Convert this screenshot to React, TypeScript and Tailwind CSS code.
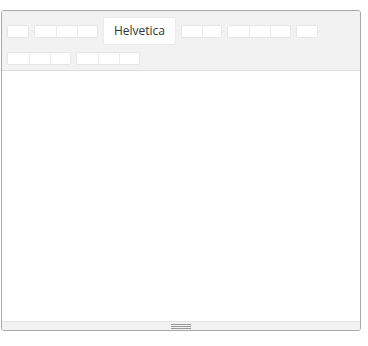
import React from 'react';

const Group = ({ widths }: { widths: number[] }) => (
  <div className="flex h-[13px] overflow-hidden rounded-[2px] border border-[#e6e6e6] bg-white">
    {widths.map((w, i) => (
      <div
        key={i}
        className={`h-full ${i > 0 ? 'border-l border-[#ececec]' : ''}`}
        style={{ width: w }}
      />
    ))}
  </div>
);

export default function App() {
  return (
    <div className="h-[346px] w-[368px] bg-white pl-px pt-[10px] font-['Open_Sans',sans-serif]">
      <div className="flex h-[321px] w-[360px] flex-col overflow-hidden rounded-[3px] border border-[#a8a8a8] bg-white">
        <div className="flex flex-col gap-[7px] border-b border-[#dcdcdc] bg-[#f2f2f2] px-[5px] pb-[5px] pt-[6px]">
          <div className="flex h-[28px] items-center gap-[5px]">
            <Group widths={[20]} />
            <Group widths={[21, 21, 20]} />
            <div className="flex h-[28px] w-[73px] items-center justify-center rounded-[2px] border border-[#ebebeb] bg-white text-[12px] text-[#333]">
              Helvetica
            </div>
            <Group widths={[20, 19]} />
            <Group widths={[21, 21, 20]} />
            <Group widths={[20]} />
          </div>
          <div className="flex items-center gap-[5px]">
            <Group widths={[21, 21, 20]} />
            <Group widths={[21, 21, 20]} />
          </div>
        </div>
        <div className="flex-1 bg-white" />
        <div className="flex h-[9px] items-center justify-center border-t border-[#e4e4e4] bg-[#f2f2f2]">
          <div className="flex w-[20px] flex-col gap-px">
            <div className="h-px bg-[#9a9a9a]" />
            <div className="h-px bg-[#9a9a9a]" />
            <div className="h-px bg-[#9a9a9a]" />
          </div>
        </div>
      </div>
    </div>
  );
}
